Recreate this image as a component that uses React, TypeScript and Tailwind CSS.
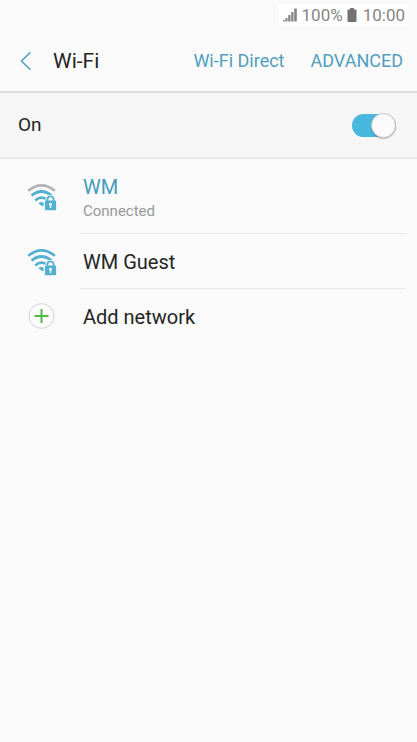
import { useState } from "react";

function WifiIcon({ weak = false }: { weak?: boolean }) {
  return (
    <svg width="30" height="28" viewBox="0 0 30 28" fill="none" aria-hidden="true">
      <g strokeWidth="2.7">
        <path d="M1.2 7.8Q14.5 -3.2 27.8 7.8" stroke={weak ? "#b3b3b3" : "#53b0d0"} />
        <path d="M4.6 12.6Q14.5 4.4 24.4 12.6" stroke="#53b0d0" />
        <path d="M8.2 17.4Q14.5 11.8 20.8 17.4" stroke="#53b0d0" />
      </g>
      <path d="M11.4 20.2Q14.5 18 17.4 20.2L17 23H14.9Z" fill="#53b0d0" />
      {/* Lock */}
      <path d="M16.6 16.8H18.4Q19 11.8 23.5 11.8T28.6 16.8H30V28H16.6Z" fill="#fafafa" />
      <path d="M20.4 19V16.4a3.1 3.1 0 0 1 6.2 0V19" stroke="#53b0d0" strokeWidth="1.8" />
      <rect x="17.9" y="17.6" width="11.2" height="9.7" rx="1" fill="#53b0d0" />
      <circle cx="23.5" cy="21.2" r="1.5" fill="#fafafa" />
      <path d="M23.5 21.5v3.6" stroke="#fafafa" strokeWidth="1.3" />
    </svg>
  );
}

function AddIcon() {
  return (
    <svg width="28" height="28" viewBox="0 0 28 28" fill="none" aria-hidden="true">
      <circle cx="14.5" cy="14" r="12.4" fill="#fcfcfc" stroke="#d2d2d2" />
      <path d="M14.5 7v14M7.5 14h14" stroke="#51bd45" strokeWidth="2" />
    </svg>
  );
}

const networks = [
  { name: "WM", connected: true },
  { name: "WM Guest", connected: false },
];

export default function App() {
  const [enabled, setEnabled] = useState(true);

  return (
    <div className="flex min-h-screen flex-col bg-[#fafafa] font-[Roboto,sans-serif] text-[#252525]">
      {/* Status bar */}
      <div className="flex h-[30px] items-center justify-end pr-[9px]">
        <div className="flex h-[22px] items-center bg-white pr-[3px] pl-1 text-[17px] leading-[22px] text-[#858585]">
          <svg width="14" height="16" viewBox="0 0 14 16" className="mr-[5px]" fill="#858585" aria-hidden="true">
            <path d="M0 13h1.6v1.6H0zM2.3 11h2.2v3.6H2.3zM5.2 8h2.3v6.6H5.2zM8.2 5h2.3v9.6H8.2zM11.2 1.5h2.6v13.1h-2.6z" />
          </svg>
          <span>100%</span>
          <svg width="10" height="14" viewBox="0 0 10 14" className="mr-[6px] ml-1" fill="#737373" aria-hidden="true">
            <path d="M3 0h4v1.5h2.5V14H.5V1.5H3z" />
          </svg>
          <span>10:00</span>
        </div>
      </div>

      {/* Header */}
      <header className="flex h-[63px] items-center border-b-2 border-[#dedede] pr-[14px] pl-5">
        <button type="button" aria-label="Back" className="mr-[21px]">
          <svg width="12" height="20" viewBox="0 0 12 20" fill="none" aria-hidden="true">
            <path d="M10.4 1.2L1.5 10l8.9 8.8" stroke="#519fbd" strokeWidth="1.6" />
          </svg>
        </button>
        <h1 className="text-[21px] leading-6">Wi-Fi</h1>
        <div className="ml-auto flex gap-[26px] text-[18px] leading-6 text-[#519fbd]">
          <button type="button">Wi-Fi Direct</button>
          <button type="button">ADVANCED</button>
        </div>
      </header>

      <main>
        {/* Switch row */}
        <label className="flex h-[66px] items-center justify-between border-b-2 border-[#e9e9e9] bg-[#f6f6f6] pr-5 pl-[18px] text-[19px] leading-6">
          On
          <span className="relative flex h-[26px] w-[45px] items-center">
            <input
              type="checkbox"
              role="switch"
              checked={enabled}
              onChange={(e) => setEnabled(e.target.checked)}
              className="peer h-[23px] w-11 appearance-none rounded-full bg-gray-300 checked:bg-[#48b8df]"
            />
            <span className="pointer-events-none absolute left-0 size-[25px] rounded-full border border-[#c9c9c9] bg-[#fafafa] shadow-[0_1px_1px_rgba(0,0,0,0.25)] peer-checked:left-[19px]" />
          </span>
        </label>

        {/* Networks */}
        <ul>
          {networks.map((network) => (
            <li key={network.name} className="flex pr-[11px]">
              <div className="flex w-20 shrink-0 items-center pl-[27px]">
                <WifiIcon weak={network.connected} />
              </div>
              <button
                type="button"
                className={
                  network.connected
                    ? "h-[75px] flex-1 border-b border-[#e9e9e9] pt-[6px] pl-[3px] text-left"
                    : "h-[55px] flex-1 border-b border-[#e9e9e9] pt-[2px] pl-[3px] text-left"
                }
              >
                <span className={network.connected ? "block text-[20px] leading-6 text-[#429cbd]" : "block text-[20px] leading-6"}>
                  {network.name}
                </span>
                {network.connected && <span className="block text-[15px] leading-6 text-[#999999]">Connected</span>}
              </button>
            </li>
          ))}
          <li className="flex pr-[11px]">
            <div className="flex w-20 shrink-0 items-center pl-[27px]">
              <AddIcon />
            </div>
            <button type="button" className="h-[54px] flex-1 pt-[2px] pl-[3px] text-left text-[20px] leading-6">
              Add network
            </button>
          </li>
        </ul>
      </main>
    </div>
  );
}
